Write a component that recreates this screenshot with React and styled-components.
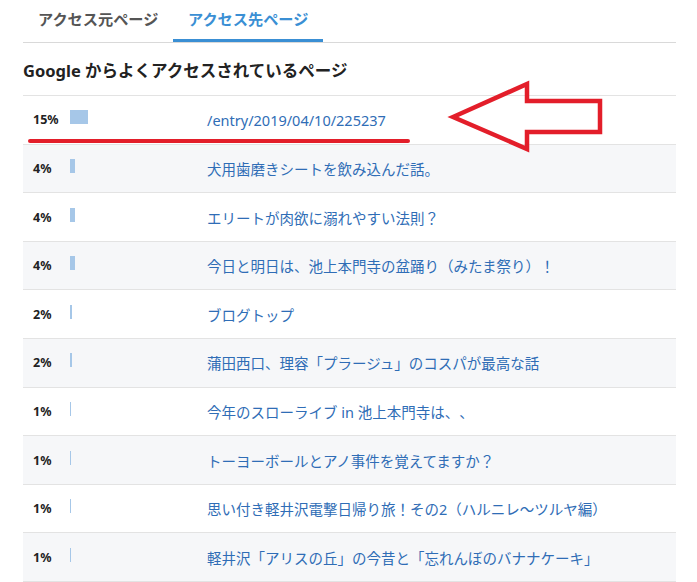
import React from "react";
import styled, { createGlobalStyle } from "styled-components";

const Global = createGlobalStyle`
  html, body { margin: 0; padding: 0; background: #fff; }
  body {
    font-family: "Noto Sans", "Noto Sans CJK JP", sans-serif;
    text-spacing-trim: space-all;
  }
`;

const Page = styled.div`
  position: relative;
  width: 697px;
  height: 582px;
  overflow: hidden;
  padding-left: 23px;
  box-sizing: border-box;
`;

const Panel = styled.div`
  width: 653px;
`;

const Tabs = styled.div`
  display: flex;
  height: 42px;
  border-bottom: 1px solid #d9d9d9;
`;

const Tab = styled.div`
  box-sizing: border-box;
  flex: 0 0 150px;
  height: 42px;
  padding: 0 0 4px 15px;
  display: flex;
  align-items: center;
  white-space: nowrap;
  font-size: 15.2px;
  font-weight: 700;
  color: ${(p) => (p.$active ? "#3a8fd4" : "#555")};
  border-bottom: 3px solid ${(p) => (p.$active ? "#3a8fd4" : "transparent")};
  margin-bottom: -1px;
`;

const Heading = styled.h2`
  margin: 0;
  height: 52px;
  display: flex;
  align-items: center;
  font-size: 16.5px;
  font-weight: 700;
  color: #222;
  padding-top: 2px;
  box-sizing: border-box;
`;

const Table = styled.div`
  border-top: 1px solid #e3e3e3;
`;

const Row = styled.div`
  display: flex;
  align-items: center;
  box-sizing: border-box;
  height: 48.62px;
  border-bottom: 1px solid #e3e3e3;
  background: ${(p) => (p.$alt ? "#f6f7f9" : "#fff")};
`;

const Pct = styled.span`
  box-sizing: border-box;
  width: 47px;
  padding-left: 10px;
  font-size: 12.5px;
  font-weight: 700;
  color: #222;
`;

const BarCell = styled.div`
  width: 137px;
  display: flex;
  align-items: center;
  height: 100%;
`;

const Bar = styled.span`
  display: block;
  height: 14px;
  margin-bottom: 5px;
  background: #a6c7e8;
`;

const Link = styled.a`
  font-size: 14.5px;
  color: #2f6db6;
  text-decoration: none;
  white-space: nowrap;
`;

const Overlay = styled.svg`
  position: absolute;
  left: 0;
  top: 0;
  pointer-events: none;
`;

const rows = [
  [15, "/entry/2019/04/10/225237"],
  [4, "犬用歯磨きシートを飲み込んだ話。"],
  [4, "エリートが肉欲に溺れやすい法則？"],
  [4, "今日と明日は、池上本門寺の盆踊り（みたま祭り）！"],
  [2, "ブログトップ"],
  [2, "蒲田西口、理容「プラージュ」のコスパが最高な話"],
  [1, "今年のスローライブ in 池上本門寺は、、"],
  [1, "トーヨーボールとアノ事件を覚えてますか？"],
  [1, "思い付き軽井沢電撃日帰り旅！その2（ハルニレ〜ツルヤ編）"],
  [1, "軽井沢「アリスの丘」の今昔と「忘れんぼのバナナケーキ」"],
];

export default function App() {
  return (
    <Page>
      <Global />
      <Panel>
        <Tabs>
          <Tab>アクセス元ページ</Tab>
          <Tab $active>アクセス先ページ</Tab>
        </Tabs>
        <Heading>Google からよくアクセスされているページ</Heading>
        <Table>
          {rows.map(([p, t], i) => (
            <Row key={i} $alt={i % 2 === 1}>
              <Pct>{p}%</Pct>
              <BarCell>
                <Bar style={{ width: `${p * 1.2}px` }} />
              </BarCell>
              <Link href="#">{t}</Link>
            </Row>
          ))}
        </Table>
      </Panel>
      <Overlay width="697" height="582" viewBox="0 0 697 582">
        <line x1="30" y1="141" x2="408" y2="141" stroke="#e31e2a" strokeWidth="4" strokeLinecap="round" />
        <polygon
          points="453,117 527,84 527,101 600,101 600,132 527,132 527,149"
          fill="none"
          stroke="#e31e2a"
          strokeWidth="4.5"
          strokeLinejoin="miter"
        />
      </Overlay>
    </Page>
  );
}
